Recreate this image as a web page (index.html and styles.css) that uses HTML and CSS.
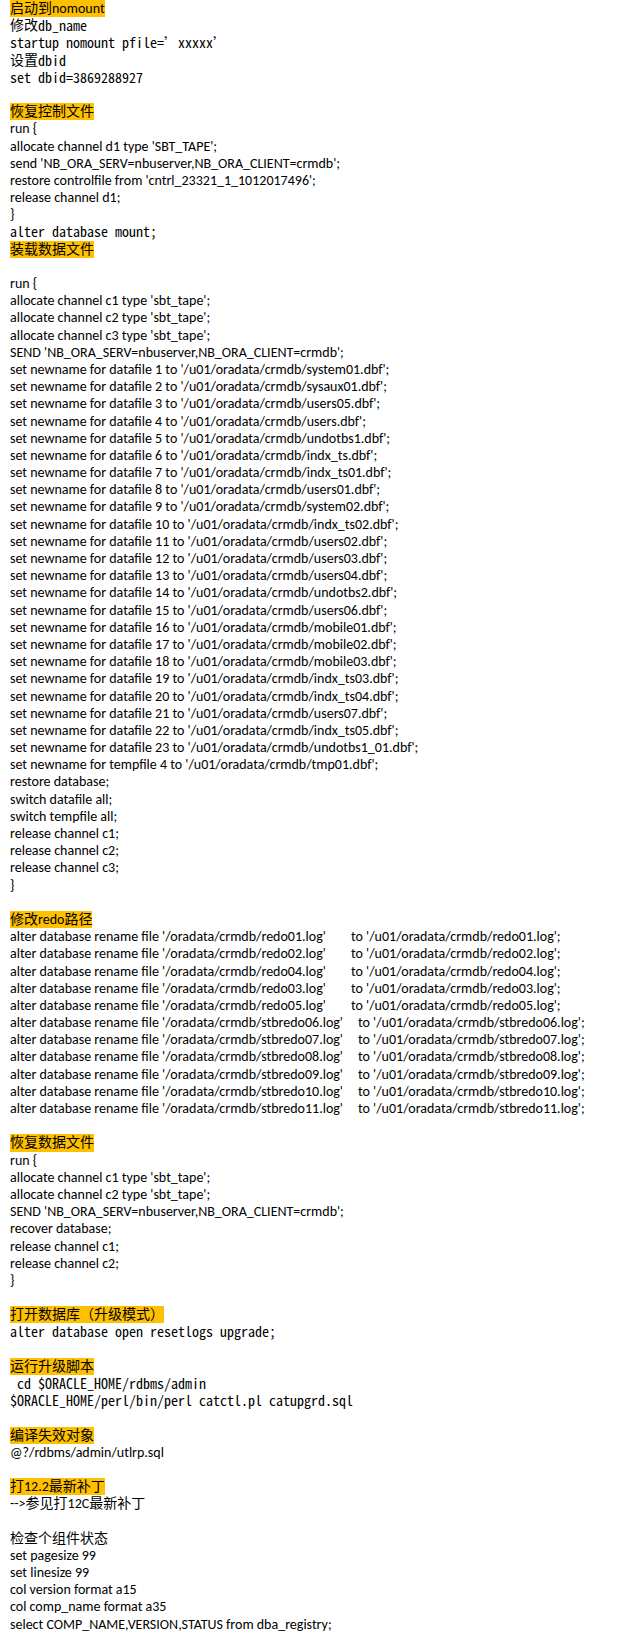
FILE: index.html
```html
<!DOCTYPE html>
<html lang="zh-CN">
<head>
<meta charset="utf-8">
<title>Restore notes</title>
<link rel="stylesheet" href="styles.css">
</head>
<body>
<div class="doc">
<div class="ln"><span class="hl">启动到nomount</span></div>
<div class="ln">修改<span class="mono">db_name</span></div>
<div class="ln mono">startup nomount pfile=’xxxxx’</div>
<div class="ln">设置<span class="mono">dbid</span></div>
<div class="ln mono">set dbid=3869288927</div>
<div class="ln"></div>
<div class="ln"><span class="hl">恢复控制文件</span></div>
<div class="ln">run {</div>
<div class="ln">allocate channel d1 type 'SBT_TAPE';</div>
<div class="ln">send 'NB_ORA_SERV=nbuserver,NB_ORA_CLIENT=crmdb';</div>
<div class="ln">restore controlfile from 'cntrl_23321_1_1012017496';</div>
<div class="ln">release channel d1;</div>
<div class="ln">}</div>
<div class="ln mono">alter database mount;</div>
<div class="ln"><span class="hl">装载数据文件</span></div>
<div class="ln"></div>
<div class="ln">run {</div>
<div class="ln">allocate channel c1 type 'sbt_tape';</div>
<div class="ln">allocate channel c2 type 'sbt_tape';</div>
<div class="ln">allocate channel c3 type 'sbt_tape';</div>
<div class="ln">SEND 'NB_ORA_SERV=nbuserver,NB_ORA_CLIENT=crmdb';</div>
<div class="ln">set newname for datafile 1 to '/u01/oradata/crmdb/system01.dbf';</div>
<div class="ln">set newname for datafile 2 to '/u01/oradata/crmdb/sysaux01.dbf';</div>
<div class="ln">set newname for datafile 3 to '/u01/oradata/crmdb/users05.dbf';</div>
<div class="ln">set newname for datafile 4 to '/u01/oradata/crmdb/users.dbf';</div>
<div class="ln">set newname for datafile 5 to '/u01/oradata/crmdb/undotbs1.dbf';</div>
<div class="ln">set newname for datafile 6 to '/u01/oradata/crmdb/indx_ts.dbf';</div>
<div class="ln">set newname for datafile 7 to '/u01/oradata/crmdb/indx_ts01.dbf';</div>
<div class="ln">set newname for datafile 8 to '/u01/oradata/crmdb/users01.dbf';</div>
<div class="ln">set newname for datafile 9 to '/u01/oradata/crmdb/system02.dbf';</div>
<div class="ln">set newname for datafile 10 to '/u01/oradata/crmdb/indx_ts02.dbf';</div>
<div class="ln">set newname for datafile 11 to '/u01/oradata/crmdb/users02.dbf';</div>
<div class="ln">set newname for datafile 12 to '/u01/oradata/crmdb/users03.dbf';</div>
<div class="ln">set newname for datafile 13 to '/u01/oradata/crmdb/users04.dbf';</div>
<div class="ln">set newname for datafile 14 to '/u01/oradata/crmdb/undotbs2.dbf';</div>
<div class="ln">set newname for datafile 15 to '/u01/oradata/crmdb/users06.dbf';</div>
<div class="ln">set newname for datafile 16 to '/u01/oradata/crmdb/mobile01.dbf';</div>
<div class="ln">set newname for datafile 17 to '/u01/oradata/crmdb/mobile02.dbf';</div>
<div class="ln">set newname for datafile 18 to '/u01/oradata/crmdb/mobile03.dbf';</div>
<div class="ln">set newname for datafile 19 to '/u01/oradata/crmdb/indx_ts03.dbf';</div>
<div class="ln">set newname for datafile 20 to '/u01/oradata/crmdb/indx_ts04.dbf';</div>
<div class="ln">set newname for datafile 21 to '/u01/oradata/crmdb/users07.dbf';</div>
<div class="ln">set newname for datafile 22 to '/u01/oradata/crmdb/indx_ts05.dbf';</div>
<div class="ln">set newname for datafile 23 to '/u01/oradata/crmdb/undotbs1_01.dbf';</div>
<div class="ln">set newname for tempfile 4 to '/u01/oradata/crmdb/tmp01.dbf';</div>
<div class="ln">restore database;</div>
<div class="ln">switch datafile all;</div>
<div class="ln">switch tempfile all;</div>
<div class="ln">release channel c1;</div>
<div class="ln">release channel c2;</div>
<div class="ln">release channel c3;</div>
<div class="ln">}</div>
<div class="ln"></div>
<div class="ln"><span class="hl">修改redo路径</span></div>
<div class="ln"><span class="src redo">alter database rename file '/oradata/crmdb/redo01.log'</span>to '/u01/oradata/crmdb/redo01.log';</div>
<div class="ln"><span class="src redo">alter database rename file '/oradata/crmdb/redo02.log'</span>to '/u01/oradata/crmdb/redo02.log';</div>
<div class="ln"><span class="src redo">alter database rename file '/oradata/crmdb/redo04.log'</span>to '/u01/oradata/crmdb/redo04.log';</div>
<div class="ln"><span class="src redo">alter database rename file '/oradata/crmdb/redo03.log'</span>to '/u01/oradata/crmdb/redo03.log';</div>
<div class="ln"><span class="src redo">alter database rename file '/oradata/crmdb/redo05.log'</span>to '/u01/oradata/crmdb/redo05.log';</div>
<div class="ln"><span class="src stb">alter database rename file '/oradata/crmdb/stbredo06.log'</span>to '/u01/oradata/crmdb/stbredo06.log';</div>
<div class="ln"><span class="src stb">alter database rename file '/oradata/crmdb/stbredo07.log'</span>to '/u01/oradata/crmdb/stbredo07.log';</div>
<div class="ln"><span class="src stb">alter database rename file '/oradata/crmdb/stbredo08.log'</span>to '/u01/oradata/crmdb/stbredo08.log';</div>
<div class="ln"><span class="src stb">alter database rename file '/oradata/crmdb/stbredo09.log'</span>to '/u01/oradata/crmdb/stbredo09.log';</div>
<div class="ln"><span class="src stb">alter database rename file '/oradata/crmdb/stbredo10.log'</span>to '/u01/oradata/crmdb/stbredo10.log';</div>
<div class="ln"><span class="src stb">alter database rename file '/oradata/crmdb/stbredo11.log'</span>to '/u01/oradata/crmdb/stbredo11.log';</div>
<div class="ln"></div>
<div class="ln"><span class="hl">恢复数据文件</span></div>
<div class="ln">run {</div>
<div class="ln">allocate channel c1 type 'sbt_tape';</div>
<div class="ln">allocate channel c2 type 'sbt_tape';</div>
<div class="ln">SEND 'NB_ORA_SERV=nbuserver,NB_ORA_CLIENT=crmdb';</div>
<div class="ln">recover database;</div>
<div class="ln">release channel c1;</div>
<div class="ln">release channel c2;</div>
<div class="ln">}</div>
<div class="ln"></div>
<div class="ln"><span class="hl">打开数据库（升级模式）</span></div>
<div class="ln mono">alter database open resetlogs upgrade;</div>
<div class="ln"></div>
<div class="ln"><span class="hl">运行升级脚本</span></div>
<div class="ln mono"> cd $ORACLE_HOME/rdbms/admin</div>
<div class="ln mono">$ORACLE_HOME/perl/bin/perl catctl.pl catupgrd.sql</div>
<div class="ln"></div>
<div class="ln"><span class="hl">编译失效对象</span></div>
<div class="ln">@?/rdbms/admin/utlrp.sql</div>
<div class="ln"></div>
<div class="ln"><span class="hl">打12.2最新补丁</span></div>
<div class="ln">--&gt;参见打12C最新补丁</div>
<div class="ln"></div>
<div class="ln">检查个组件状态</div>
<div class="ln">set pagesize 99</div>
<div class="ln">set linesize 99</div>
<div class="ln">col version format a15</div>
<div class="ln">col comp_name format a35</div>
<div class="ln">select COMP_NAME,VERSION,STATUS from dba_registry;</div>
</div>
</body>
</html>
```

FILE: styles.css
```css
html, body {
  margin: 0;
  padding: 0;
  background: #ffffff;
}
.doc {
  padding: 0 0 0 10px;
  color: #000000;
  font-family: Carlito, "Noto Sans CJK SC", sans-serif;
  font-size: 14px;
}
.ln {
  height: 17.2px;
  line-height: 17.2px;
  white-space: pre;
  overflow: visible;
}
.mono {
  font-family: "Noto Sans Mono CJK SC", "Noto Sans CJK SC", monospace;
  font-size: 14px;
  line-height: 17.2px;
  vertical-align: top;
}
.hl {
  display: inline-block;
  vertical-align: top;
  height: 17.2px;
  background: #ffc000;
}
.src {
  display: inline-block;
  vertical-align: top;
}
.redo { width: 341px; }
.stb { width: 348px; }
```
